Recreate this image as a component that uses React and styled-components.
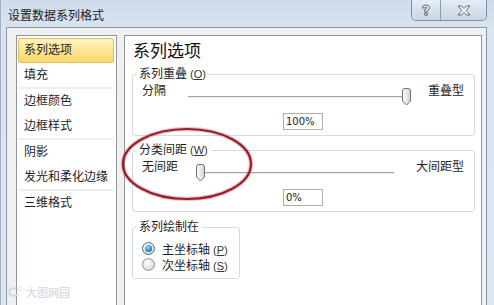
import React from "react";
import styled, { createGlobalStyle, css } from "styled-components";

const GlobalStyle = createGlobalStyle`
  html, body {
    margin: 0;
    padding: 0;
    width: 494px;
    height: 305px;
    overflow: hidden;
  }
  body {
    font-family: "Liberation Sans", "Noto Sans CJK SC", sans-serif;
    font-size: 12px;
    color: #1e1e1e;
  }
`;

const Window = styled.div`
  position: relative;
  width: 494px;
  height: 305px;
  box-sizing: border-box;
  display: flex;
  flex-direction: column;
  padding: 0 7px 0 5px;
  border-left: 1px solid #a3b0c0;
  background: linear-gradient(180deg, #cfdbe9 0px, #d9e4f0 28px, #dde7f2 100%);
  overflow: hidden;
`;

const TitleBar = styled.div`
  height: 27px;
  display: flex;
  justify-content: space-between;
  align-items: flex-start;
  flex-shrink: 0;
`;

const Title = styled.div`
  margin: 8px 0 0 2px;
  line-height: 16px;
  font-size: 12px;
  color: #1b1b1b;
`;

const CaptionGroup = styled.div`
  display: flex;
  height: 20px;
  border: 1px solid #7d8ea5;
  border-top: none;
  border-radius: 0 0 5px 5px;
  overflow: hidden;
  box-shadow: inset 0 0 0 1px rgba(255, 255, 255, 0.6);
`;

const CaptionButton = styled.div`
  width: ${(p) => p.$w}px;
  display: flex;
  align-items: center;
  justify-content: center;
  background: linear-gradient(180deg, #e6edf5 0%, #d6e1ec 50%, #c9d6e4 100%);
  & + & {
    border-left: 1px solid #8c9cb1;
  }
`;

const Body = styled.div`
  flex: 1;
  display: flex;
  min-height: 0;
  box-sizing: border-box;
  padding: 7px 4px 0 9px;
  border: 1px solid #8a98ab;
  border-bottom: none;
  background: #f0f0f0;
`;

const NavList = styled.div`
  width: 101px;
  box-sizing: border-box;
  border: 1px solid #8f959c;
  border-bottom: none;
  background: #fff;
  padding: 2px 2px 0 1px;
  display: flex;
  flex-direction: column;
`;

const NavItem = styled.div`
  height: 25px;
  box-sizing: border-box;
  line-height: 23px;
  padding-left: 5px;
  border: 1px solid transparent;
  border-radius: 2px;
  white-space: nowrap;
  ${(p) =>
    p.$active &&
    css`
      background: linear-gradient(180deg, #fff3c0 0%, #fde48f 55%, #fcd86b 100%);
      border-color: #e0bf63;
    `}
`;

const NavSeparator = styled.div`
  height: 2px;
  margin-top: -1px;
  background: #eceff2;
`;

const Panel = styled.div`
  flex: 1;
  margin-left: 7px;
  box-sizing: border-box;
  border: 1px solid #8f959c;
  border-bottom: none;
  background: #fff;
  padding: 5px 6px 0 7px;
  display: flex;
  flex-direction: column;
`;

const Heading = styled.div`
  font-size: 17px;
  line-height: 22px;
  margin-left: 1px;
  color: #111;
`;

const Group = styled.fieldset`
  margin: ${(p) => p.$top}px 0 0 0;
  padding: 1px 10px 5px 9px;
  border: 1px solid #d5dadf;
  border-radius: 3px;
  min-width: 0;
  ${(p) =>
    p.$narrow &&
    css`
      align-self: flex-start;
      width: 108px;
      box-sizing: border-box;
      padding-top: 5px;
      padding-bottom: 6px;
    `}
`;

const Legend = styled.legend`
  padding: 0 3px;
  margin-left: -6px;
  line-height: 16px;
  font-size: 12px;
  white-space: nowrap;
`;

const Key = styled.span`
  margin-left: 3px;
  font-size: 11px;
  color: #333;
  & u {
    text-underline-offset: 1px;
  }
`;

const SliderRow = styled.div`
  display: flex;
  align-items: flex-start;
  gap: 17px;
`;

const SliderLabel = styled.div`
  line-height: 16px;
  white-space: nowrap;
`;

const Slider = styled.div`
  position: relative;
  flex: 1;
  height: 17px;
  margin-top: 5px;
`;

const Track = styled.div`
  position: absolute;
  left: 5px;
  right: 5px;
  top: 8px;
  height: 1px;
  background: #a4a4a4;
  border-bottom: 1px solid #ececec;
`;

const Thumb = styled.svg`
  position: absolute;
  top: 0;
  width: 11px;
  height: 18px;
`;

const ValueRow = styled.div`
  display: flex;
  justify-content: center;
  margin-top: 8px;
`;

const ValueBox = styled.input`
  width: 40px;
  height: 17px;
  box-sizing: border-box;
  border: 1px solid #abadb3;
  padding: 0 2px;
  font-family: "DejaVu Sans", "Liberation Sans", sans-serif;
  font-size: 10px;
  color: #222;
  outline: none;
  background: #fff;
`;

const RadioRow = styled.label`
  display: flex;
  align-items: center;
  height: 16px;
  gap: 7px;
  white-space: nowrap;
`;

const RadioDot = styled.span`
  position: relative;
  width: 13px;
  height: 13px;
  box-sizing: border-box;
  border-radius: 50%;
  border: 1px solid #8f9193;
  background: radial-gradient(circle at 40% 35%, #ffffff 0%, #e4e4e4 55%, #c9c9c9 100%);
  ${(p) =>
    p.$checked &&
    css`
      border-color: #3f6e95;
      &::after {
        content: "";
        position: absolute;
        left: 2px;
        top: 2px;
        width: 7px;
        height: 7px;
        border-radius: 50%;
        background: radial-gradient(circle at 40% 35%, #a9dcff 0%, #3c8ed2 50%, #0d4a86 100%);
      }
    `}
`;

const Annotation = styled.svg`
  position: absolute;
  left: 117px;
  top: 124px;
  width: 138px;
  height: 80px;
  pointer-events: none;
`;

const Watermark = styled.div`
  position: absolute;
  left: 6px;
  bottom: 5px;
  display: flex;
  align-items: center;
  gap: 3px;
  font-size: 11px;
  color: #d3d8de;
  text-shadow: 0 0 1px #eef1f4;
`;

const ThumbIcon = ({ value }) => (
  <Thumb
    viewBox="0 0 11 18"
    style={{ left: `calc(${value}% - ${(value * 10) / 100}px)` }}
  >
    <defs>
      <linearGradient id="tg" x1="0" y1="0" x2="1" y2="0">
        <stop offset="0" stopColor="#fdfdfd" />
        <stop offset="1" stopColor="#d3d3d3" />
      </linearGradient>
    </defs>
    <path
      d="M1.5 3 Q1.5 0.5 4 0.5 H7 Q9.5 0.5 9.5 3 V13 L5.5 17 L1.5 13 Z"
      fill="url(#tg)"
      stroke="#707070"
      strokeWidth="1"
    />
  </Thumb>
);

const SliderGroup = ({ legend, keyChar, left, right, value, text, top }) => (
  <Group $top={top}>
    <Legend>
      {legend}
      <Key>
        (<u>{keyChar}</u>)
      </Key>
    </Legend>
    <SliderRow>
      <SliderLabel>{left}</SliderLabel>
      <Slider>
        <Track />
        <ThumbIcon value={value} />
      </Slider>
      <SliderLabel>{right}</SliderLabel>
    </SliderRow>
    <ValueRow>
      <ValueBox readOnly value={text} />
    </ValueRow>
  </Group>
);

const navGroups = [
  ["系列选项", "填充"],
  ["边框颜色", "边框样式"],
  ["阴影", "发光和柔化边缘"],
  ["三维格式"],
];

export default function App() {
  return (
    <Window>
      <GlobalStyle />
      <TitleBar>
        <Title>设置数据系列格式</Title>
        <CaptionGroup>
          <CaptionButton $w={28}>
            <svg width="10" height="12" viewBox="0 0 10 12">
              <path
                d="M1.5 4 Q1.5 1 5 1 Q8.5 1 8.5 3.8 Q8.5 5.6 6.3 6.4 V8 H3.8 V5.6 Q6 5 6 3.8 Q6 3.1 5 3.1 Q4 3.1 4 4 Z M3.8 9 H6.3 V11.2 H3.8 Z"
                fill="#fff"
                stroke="#4a5565"
                strokeWidth="0.9"
                strokeLinejoin="round"
              />
            </svg>
          </CaptionButton>
          <CaptionButton $w={45}>
            <svg width="14" height="11" viewBox="0 0 14 11">
              <path
                d="M1 1 H4.5 L7 3.6 L9.5 1 H13 L9 5.5 L13 10 H9.5 L7 7.4 L4.5 10 H1 L5 5.5 Z"
                fill="#fff"
                stroke="#4a5565"
                strokeWidth="0.9"
                strokeLinejoin="round"
              />
            </svg>
          </CaptionButton>
        </CaptionGroup>
      </TitleBar>
      <Body>
        <NavList>
          {navGroups.map((group, gi) => (
            <React.Fragment key={gi}>
              {gi > 0 && <NavSeparator />}
              {group.map((label) => (
                <NavItem key={label} $active={label === "系列选项"}>
                  {label}
                </NavItem>
              ))}
            </React.Fragment>
          ))}
        </NavList>
        <Panel>
          <Heading>系列选项</Heading>
          <SliderGroup
            top={3}
            legend="系列重叠"
            keyChar="O"
            left="分隔"
            right="重叠型"
            value={100}
            text="100%"
          />
          <SliderGroup
            top={6}
            legend="分类间距"
            keyChar="W"
            left="无间距"
            right="大间距型"
            value={0}
            text="0%"
          />
          <Group $top={7} $narrow>
            <Legend>系列绘制在</Legend>
            <RadioRow>
              <RadioDot $checked />
              <span>
                主坐标轴<Key>(<u>P</u>)</Key>
              </span>
            </RadioRow>
            <RadioRow>
              <RadioDot />
              <span>
                次坐标轴<Key>(<u>S</u>)</Key>
              </span>
            </RadioRow>
          </Group>
        </Panel>
      </Body>
      <Annotation viewBox="0 0 138 80">
        <ellipse cx="69" cy="40" rx="64" ry="35" fill="none" stroke="rgba(160,40,50,0.25)" strokeWidth="4.5" />
        <ellipse cx="69" cy="40" rx="64" ry="35" fill="none" stroke="#9e1b2a" strokeWidth="2.2" />
      </Annotation>
      <Watermark>
        <svg width="16" height="12" viewBox="0 0 16 12">
          <path d="M9 3 Q4 1 2.5 5 Q1.5 9.5 6.5 10 Q9.5 10 11 8" fill="none" stroke="#d3d8de" strokeWidth="2" />
          <circle cx="13" cy="2.5" r="1.8" fill="none" stroke="#d3d8de" strokeWidth="0.8" />
        </svg>
        <span>大图网园</span>
      </Watermark>
    </Window>
  );
}
